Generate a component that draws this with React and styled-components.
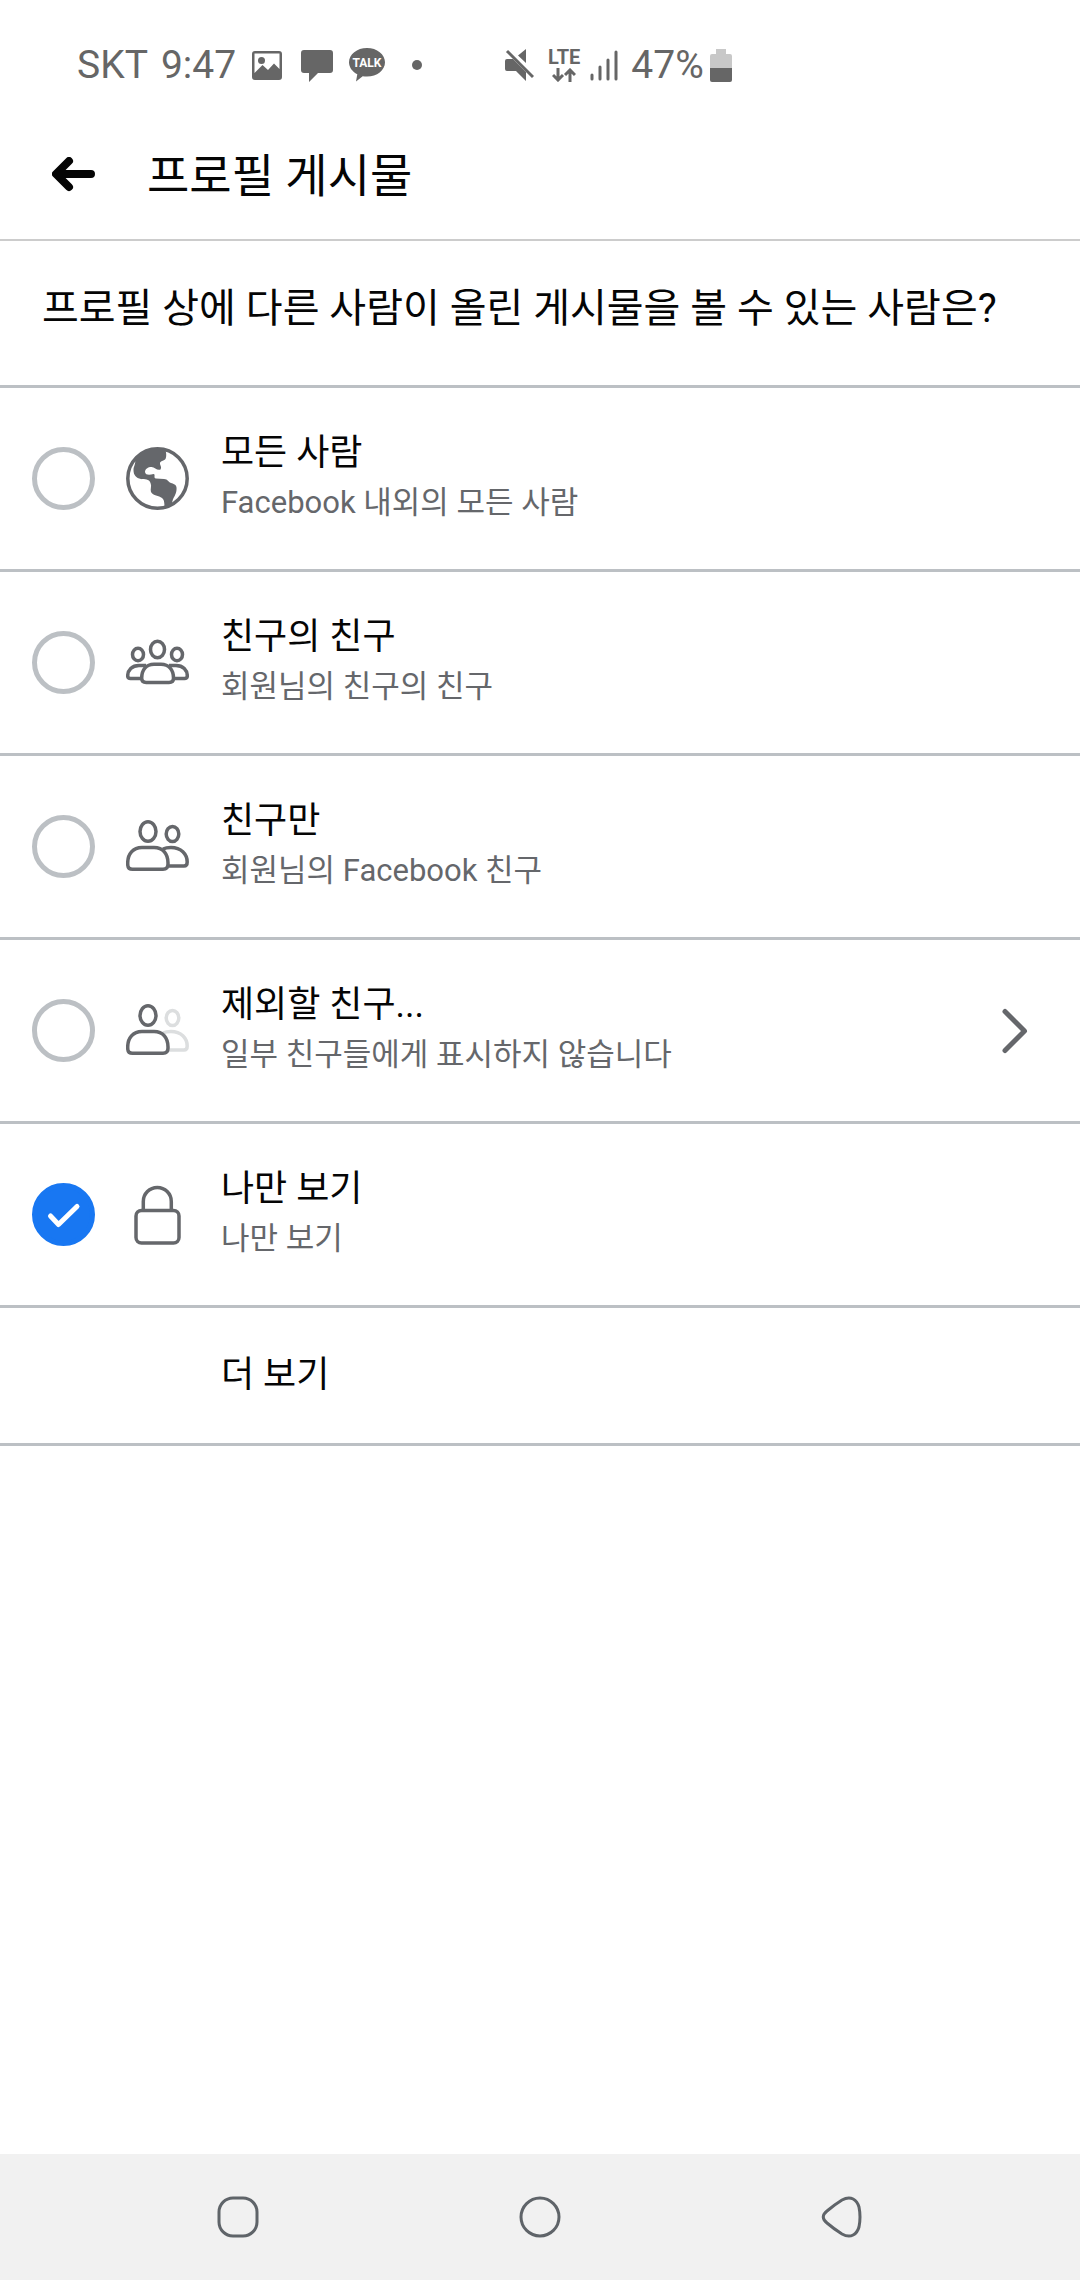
import React, { useState } from "react";
import styled, { createGlobalStyle } from "styled-components";

const options = [
  {
    id: "public",
    title: "모든 사람",
    text: "Facebook 내외의 모든 사람",
    icon: <Globe />,
  },
  {
    id: "friends-of-friends",
    title: "친구의 친구",
    text: "회원님의 친구의 친구",
    icon: <Group />,
  },
  {
    id: "friends",
    title: "친구만",
    text: "회원님의 Facebook 친구",
    icon: <Friends />,
  },
  {
    id: "except",
    title: "제외할 친구...",
    text: "일부 친구들에게 표시하지 않습니다",
    icon: <Friends faded />,
    more: true,
  },
  {
    id: "only-me",
    title: "나만 보기",
    text: "나만 보기",
    icon: <Lock />,
  },
];

function App() {
  const [selected, setSelected] = useState("only-me");
  return (
    <Page>
      <GlobalStyle />
      <StatusBar />
      <Header>
        <BackButton type="button" aria-label="뒤로">
          <svg width="43" height="36" viewBox="0 0 43 36">
            <path
              d="M39 17H6M17 4L4 17l13 13"
              fill="none"
              stroke="#050505"
              strokeWidth="8"
              strokeLinecap="round"
              strokeLinejoin="round"
            />
          </svg>
        </BackButton>
        <Title>프로필 게시물</Title>
      </Header>
      <main>
        <Question id="question">
          프로필 상에 다른 사람이 올린 게시물을 볼 수 있는 사람은?
        </Question>
        <div role="radiogroup" aria-labelledby="question">
          {options.map((option) => (
            <Option key={option.id}>
              <RadioBox>
                <Radio
                  type="radio"
                  name="audience"
                  value={option.id}
                  checked={selected === option.id}
                  onChange={() => setSelected(option.id)}
                />
                {selected === option.id && <Check />}
              </RadioBox>
              <IconBox>{option.icon}</IconBox>
              <Texts>
                <OptionTitle>{option.title}</OptionTitle>
                <OptionText>{option.text}</OptionText>
              </Texts>
              {option.more && <Chevron />}
            </Option>
          ))}
        </div>
        <MoreButton type="button">더 보기</MoreButton>
      </main>
      <NavBar>
        <NavButton type="button" aria-label="최근 앱">
          <NavIcon>
            <rect x="2" y="2" width="38" height="38" rx="14" />
          </NavIcon>
        </NavButton>
        <NavButton type="button" aria-label="홈">
          <NavIcon>
            <circle cx="21" cy="21" r="19" />
          </NavIcon>
        </NavButton>
        <NavButton type="button" aria-label="뒤로 가기">
          <NavIcon>
            <path d="M21 4C30 -1 36 4 38 11Q40 21 38 31C36 38 30 43 21 38Q13 33 6 27Q-1.500 21 6 15Q13 9 21 4Z" />
          </NavIcon>
        </NavButton>
      </NavBar>
    </Page>
  );
}

export default App;

function StatusBar() {
  return (
    <Status>
      <StatusText>SKT</StatusText>
      <StatusText $left={13}>9:47</StatusText>
      <StatusIcon $left={15} width="32" height="34" viewBox="0 0 32 34">
        <path
          fillRule="evenodd"
          d="M4 3h24a3 3 0 0 1 3 3v23a3 3 0 0 1-3 3H4a3 3 0 0 1-3-3V6a3 3 0 0 1 3-3zM3.500 5.500V25l8-8 5.500 5 6-6.500 5.500 5.500V5.500z"
        />
        <circle cx="10.500" cy="12.500" r="3.500" />
      </StatusIcon>
      <StatusIcon $left={17} width="34" height="34" viewBox="0 0 34 34">
        <path d="M4 2h26a3 3 0 0 1 3 3v17a3 3 0 0 1-3 3H18l-9 9v-9H4a3 3 0 0 1-3-3V5a3 3 0 0 1 3-3z" />
      </StatusIcon>
      <StatusIcon $left={15} width="36" height="34" viewBox="0 0 36 34">
        <path d="M18 0c10 0 18 6.300 18 14.300s-8 14.300-18 14.300c-1.500 0-3-.1-4.300-.4L7 33.500l1.300-7.300C3.200 23.700 0 19.300 0 14.300 0 6.300 8 0 18 0z" />
        <text
          x="18"
          y="19"
          textAnchor="middle"
          fontSize="12"
          fontWeight="700"
          fill="#fff"
        >
          TALK
        </text>
      </StatusIcon>
      <StatusIcon $left={27} width="10" height="10" viewBox="0 0 10 10">
        <circle cx="5" cy="5" r="5" />
      </StatusIcon>
      <StatusIcon $left={83} width="29" height="34" viewBox="0 0 29 34">
        <path d="M21 1v14l-8-7.500zM2 11h6l13 13v9l-10-10H2a2 2 0 0 1-2-2v-8a2 2 0 0 1 2-2z" />
        <path d="M2 3l26 26" stroke="#666" strokeWidth="3" />
      </StatusIcon>
      <Lte>
        LTE
        <svg width="24" height="14" viewBox="0 0 24 14" fill="none">
          <path
            d="M6 0v12M1 7l5 5 5-5M18 14V2M13 7l5-5 5 5"
            stroke="#666"
            strokeWidth="3"
          />
        </svg>
      </Lte>
      <StatusIcon $left={10} width="28" height="34" viewBox="0 0 28 34">
        <path
          d="M2 27v4M10 19v12M18 12v19M26 4v27"
          stroke="#666"
          strokeWidth="3"
          strokeLinecap="round"
        />
      </StatusIcon>
      <StatusText $left={13}>47%</StatusText>
      <StatusIcon $left={6} width="22" height="34" viewBox="0 0 22 34">
        <path
          d="M6 1h10v5h4a2 2 0 0 1 2 2v12H0V8a2 2 0 0 1 2-2h4z"
          fill="#c8c8c8"
        />
        <path d="M0 20h22v12a2 2 0 0 1-2 2H2a2 2 0 0 1-2-2z" />
      </StatusIcon>
    </Status>
  );
}

function Globe() {
  return (
    <svg width="63" height="63" viewBox="0 0 63 63">
      <circle
        cx="31.500"
        cy="31.500"
        r="29.700"
        fill="none"
        stroke="#65676b"
        strokeWidth="3.500"
      />
      <path
        fill="#65676b"
        d="M9 13C15 5 23 1 32 1.500L39.500 3Q41 9 39.500 12C37.500 14.500 34 13.500 34 16.500C34 18.500 36 20 34.500 22.500C31 24 29 20 25.500 20C22 20 19 22 19 25C19.500 28.500 24 28 27.500 27C30 27.500 27 31 30 31.500L38 32C42 32 42 35 45 36C50 37.500 51 39 50.500 43C50 48 47.500 50 46.500 54L45 59L39 61.500C38 58 39 53 36 51C33 48.500 27 49 25 45C24 42 26 39 24.500 36C23 31.500 19 32.500 15 32C10 31 7.500 28 7.500 23C7.500 19 10 17 9 13Z"
      />
    </svg>
  );
}

function Group() {
  return (
    <LineIcon>
      <ellipse cx="31.500" cy="18.500" rx="7" ry="8.200" />
      <ellipse cx="12" cy="23.500" rx="5.500" ry="6.300" />
      <ellipse cx="51" cy="23.500" rx="5.500" ry="6.300" />
      <path d="M15.700 47C15.700 39 20 33.200 28 33.200H35C43 33.200 47.500 39 47.500 47Q47.500 51.500 43 51.500H20.200Q15.700 51.500 15.700 47Z" />
      <path d="M20 34.500H13C6 34.500 1.700 39 1.700 45Q1.700 47.500 4.500 47.500H15.500M43 34.500H50C57 34.500 61.300 39 61.300 45Q61.300 47.500 58.500 47.500H47.500" />
    </LineIcon>
  );
}

function Friends({ faded }) {
  return (
    <LineIcon>
      <g stroke={faded ? "#dcdedf" : "#65676b"}>
        <ellipse cx="46.500" cy="19" rx="6.300" ry="7.500" />
        <path d="M37 34Q40 32.500 45 32.500C55 32.500 61.200 39 61.200 47Q61.200 51 58 51H43" />
      </g>
      <ellipse cx="22" cy="16.500" rx="8" ry="9.800" />
      <path d="M1.700 48C1.700 39 7 32.500 16 32.500H28C37 32.500 42 39 42 48V49Q42 54.300 37 54.300H6.500Q1.700 54.300 1.700 49Z" />
    </LineIcon>
  );
}

function Lock() {
  return (
    <LineIcon>
      <rect x="10" y="27.500" width="43" height="32.500" rx="5.500" />
      <path d="M17.300 27V18.500a14 14 0 0 1 28 0V27" />
    </LineIcon>
  );
}

function Check() {
  return (
    <CheckMark width="63" height="63" viewBox="0 0 63 63">
      <path d="M18.500 33l8 8.500L45 23.500" />
    </CheckMark>
  );
}

function Chevron() {
  return (
    <svg width="26" height="46" viewBox="0 0 26 46">
      <path
        d="M3 3.500L22.500 23 3 42.500"
        fill="none"
        stroke="#65676b"
        strokeWidth="5"
        strokeLinecap="round"
        strokeLinejoin="round"
      />
    </svg>
  );
}

const GlobalStyle = createGlobalStyle`
  * {
    box-sizing: border-box;
  }
  body {
    margin: 0;
    background: #fff;
    color: #050505;
    font-family: Roboto, "Noto Sans CJK KR", sans-serif;
  }
  svg {
    display: block;
    flex: none;
  }
  button {
    margin: 0;
    padding: 0;
    border: 0;
    background: none;
    color: inherit;
    font: inherit;
    cursor: pointer;
  }
`;
const Page = styled.div`
  display: flex;
  flex-direction: column;
  min-height: 100vh;
`;
const Status = styled.div`
  display: flex;
  align-items: center;
  height: 110px;
  padding: 20px 77px 0;
  color: #666;
`;
const StatusText = styled.span`
  margin-left: ${({ $left = 0 }) => $left}px;
  font-size: 39px;
  line-height: 46px;
`;
const StatusIcon = styled.svg`
  margin-left: ${({ $left }) => $left}px;
  fill: #666;
`;
const Lte = styled.span`
  display: flex;
  flex-direction: column;
  align-items: center;
  gap: 2px;
  margin-left: 14px;
  font-size: 20px;
  font-weight: 700;
  line-height: 18px;
`;
const Header = styled.header`
  display: flex;
  align-items: center;
  height: 131px;
  padding: 0 52px;
  border-bottom: 2px solid #ccc;
`;
const BackButton = styled.button`
  margin-right: 52px;
`;
const Title = styled.h1`
  margin: 0;
  padding-top: 2px;
  font-size: 46px;
  font-weight: 400;
  line-height: 60px;
`;
const Question = styled.h2`
  margin: 0;
  padding: 38px 42px 46px;
  border-bottom: 3px solid #bcc0c4;
  font-size: 40px;
  font-weight: 400;
  line-height: 60px;
`;
const Option = styled.label`
  display: flex;
  align-items: center;
  height: 184px;
  padding: 0 52px 0 32px;
  border-bottom: 3px solid #bcc0c4;
  cursor: pointer;
`;
const RadioBox = styled.span`
  display: grid;
  margin-right: 31px;
`;
const Radio = styled.input`
  grid-area: 1 / 1;
  width: 63px;
  height: 63px;
  margin: 0;
  appearance: none;
  border: 5px solid #bcc0c4;
  border-radius: 50%;
  &:checked {
    border-color: #1877f2;
    background: #1877f2;
  }
`;
const CheckMark = styled.svg`
  grid-area: 1 / 1;
  pointer-events: none;
  fill: none;
  stroke: #fff;
  stroke-width: 5;
  stroke-linecap: round;
  stroke-linejoin: round;
`;
const IconBox = styled.span`
  margin-right: 32px;
`;
const LineIcon = styled.svg.attrs({
  width: 63,
  height: 63,
  viewBox: "0 0 63 63",
})`
  fill: none;
  stroke: #65676b;
  stroke-width: 3.5;
`;
const Texts = styled.span`
  flex: 1;
  min-width: 0;
  padding-bottom: 2px;
`;
const OptionTitle = styled.span`
  display: block;
  font-size: 36px;
  line-height: 50px;
`;
const OptionText = styled.span`
  display: block;
  color: #65676b;
  font-size: 31px;
  line-height: 50px;
`;
const MoreButton = styled.button`
  display: block;
  width: 100%;
  height: 138px;
  padding: 0 52px 2px 221px;
  border-bottom: 3px solid #bcc0c4;
  font-size: 36px;
  line-height: 50px;
  text-align: left;
`;
const NavBar = styled.nav`
  display: grid;
  grid-template-columns: repeat(3, 1fr);
  height: 126px;
  margin-top: auto;
  padding: 0 87px;
  background: #f1f1f1;
`;
const NavButton = styled.button`
  display: flex;
  align-items: center;
  justify-content: center;
`;
const NavIcon = styled.svg.attrs({
  width: 42,
  height: 42,
  viewBox: "0 0 42 42",
})`
  fill: none;
  stroke: #5f6469;
  stroke-width: 3;
`;
